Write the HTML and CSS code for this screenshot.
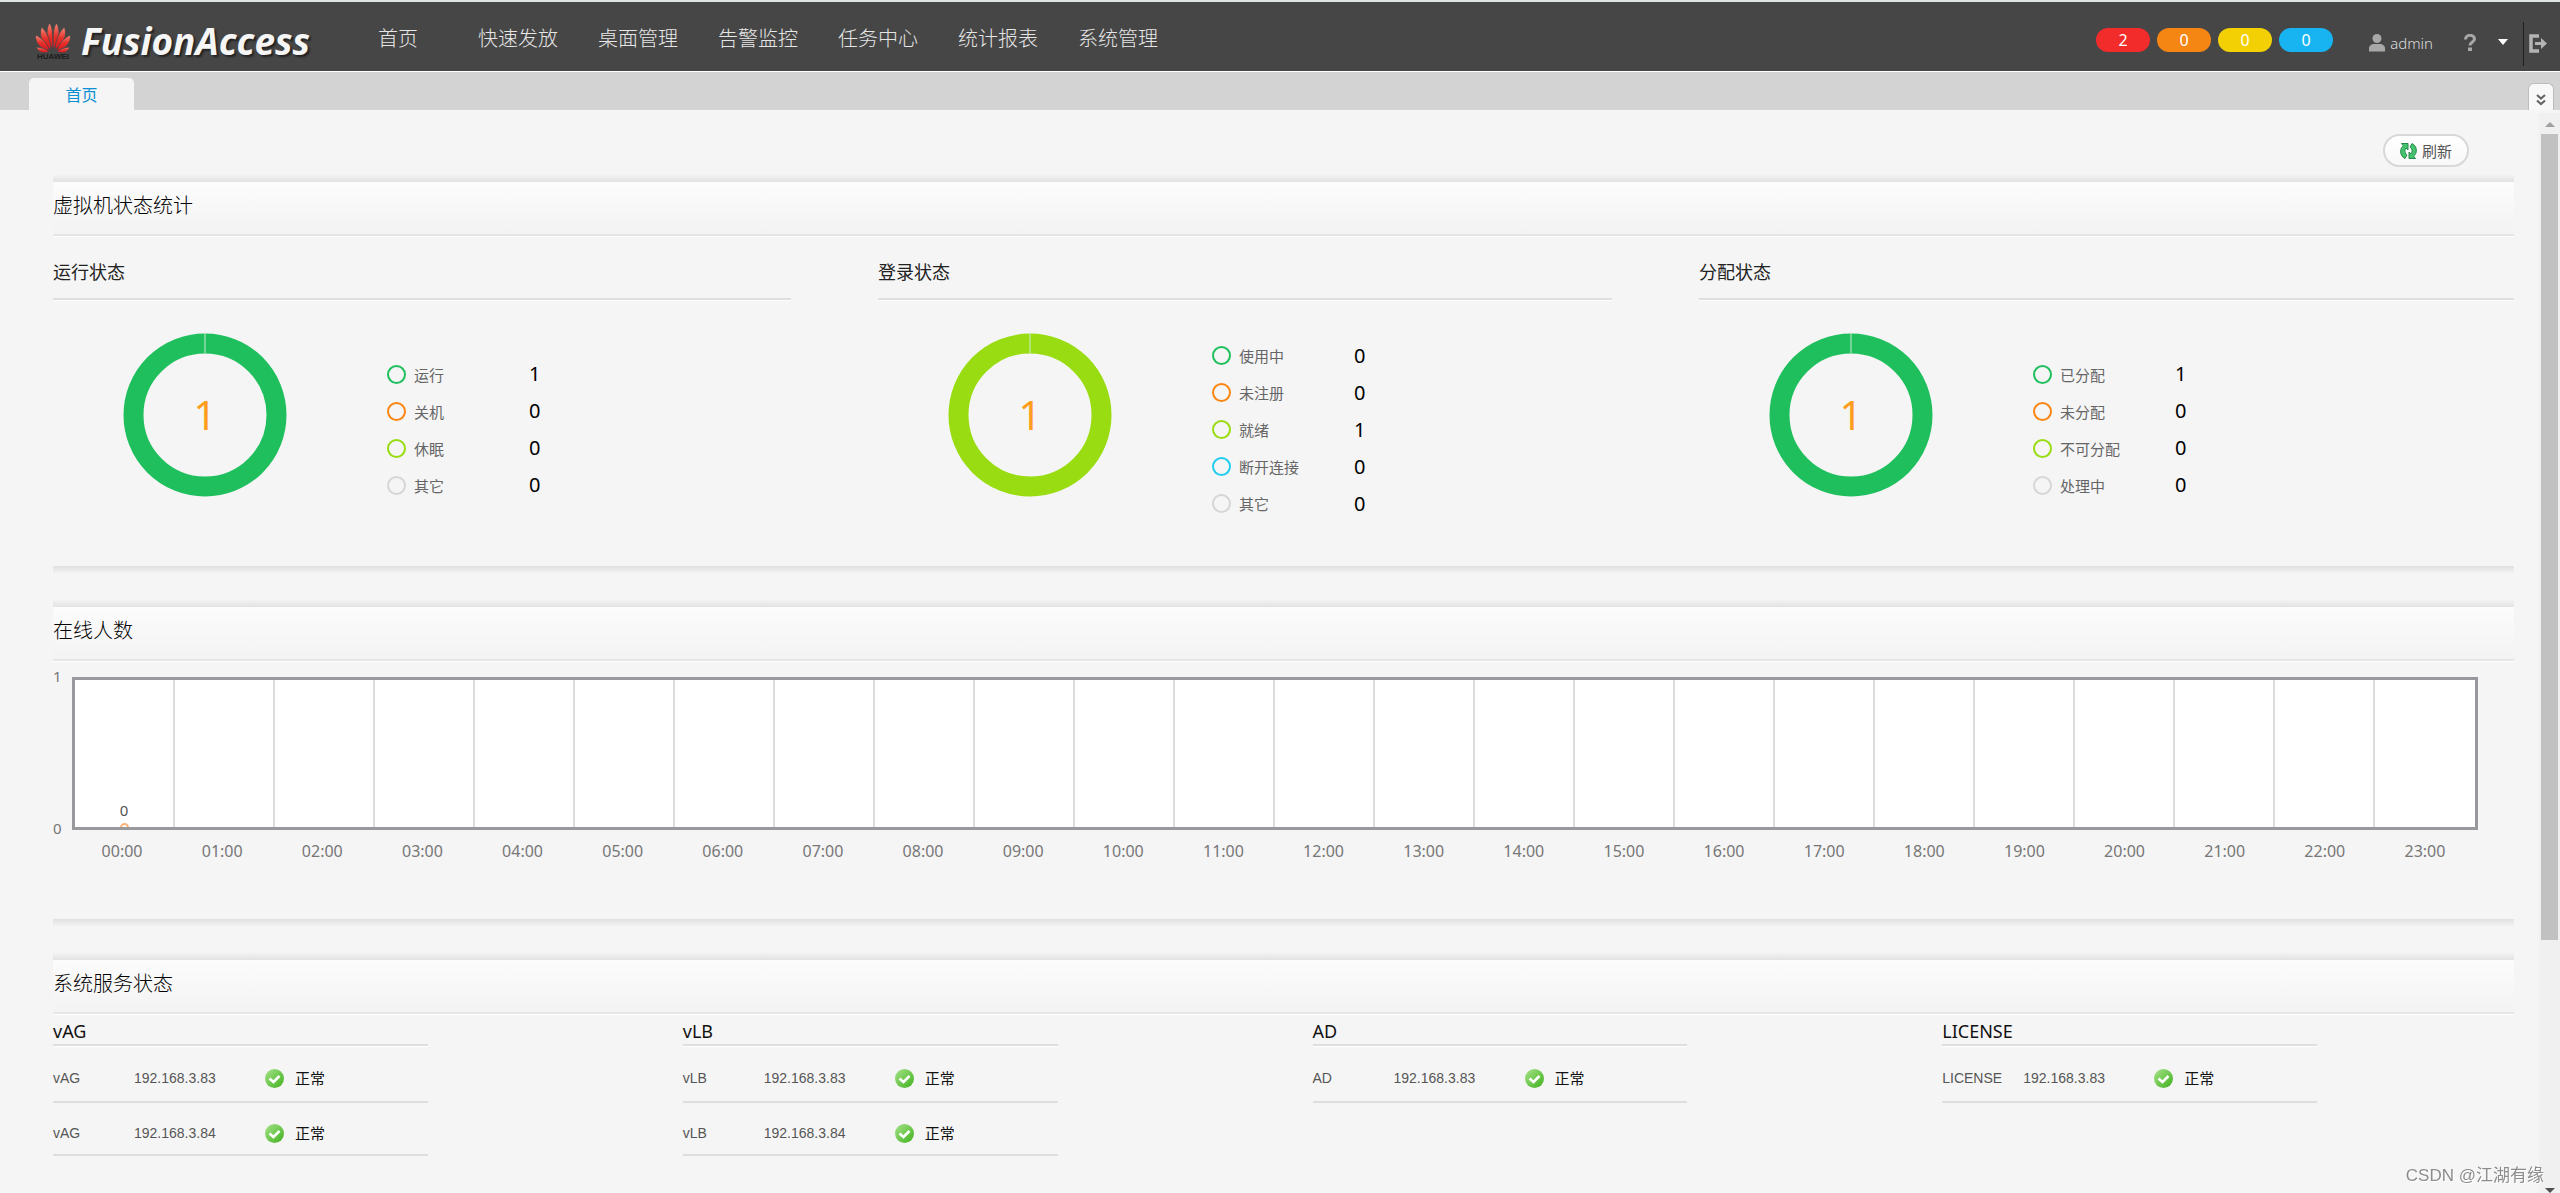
FILE: index.html
```html
<!DOCTYPE html>
<html lang="zh-CN">
<head>
<meta charset="utf-8">
<title>FusionAccess</title>
<meta name="viewport" content="width=device-width, initial-scale=1">
<link rel="stylesheet" href="styles.css">
</head>
<body>
<svg class="defs" width="0" height="0" aria-hidden="true">
  <defs>
    <linearGradient id="ok-fill" x1="0" y1="0" x2="1" y2="1">
      <stop offset="0" stop-color="#a6e38a"/><stop offset="1" stop-color="#3fb01c"/>
    </linearGradient>
    <linearGradient id="petal-fill" x1="0" y1="0" x2="0" y2="1">
      <stop offset="0" stop-color="#f58a78"/><stop offset="0.5" stop-color="#e5322c"/><stop offset="1" stop-color="#d8161c"/>
    </linearGradient>
    <symbol id="ok" viewBox="0 0 19 19">
      <circle cx="9.500" cy="9.500" r="9.500" fill="url(#ok-fill)"/>
      <path d="M4.500 9.500l4 3.500L14.500 7" fill="none" stroke="#fff" stroke-width="2.600"/>
    </symbol>
  </defs>
</svg>
<div class="app">
  <header class="topbar">
    <a class="brand" href="#">
      <svg class="brand-mark" viewBox="0 0 38 38" aria-hidden="true">
        <g fill="url(#petal-fill)" stroke="#464646" stroke-width="0.800">
          <path d="M18.500 27C13 20 11 8 15.500 1c3.500 4 4 16 3 26z"/>
          <path d="M19.500 27C25 20 27 8 22.500 1c-3.500 4-4 16-3 26z"/>
          <path d="M17 27.500C8 22 4.500 13 7.500 5c5 4 9 13 9.500 22.500z"/>
          <path d="M21 27.500C30 22 33.500 13 30.500 5c-5 4-9 13-9.500 22.500z"/>
          <path d="M15.500 28.500C6 27 1 21 1.500 13c6 2.500 12 8.500 14 15.500z"/>
          <path d="M22.500 28.500C32 27 37 21 36.500 13c-6 2.500-12 8.500-14 15.500z"/>
          <path d="M15 29.500c-5 2.500-10 1.500-13-4.500 5 .5 10 1.500 13 4.500z"/>
          <path d="M23 29.500c5 2.500 10 1.500 13-4.500-5 .5-10 1.500-13 4.500z"/>
        </g>
        <text x="19" y="37" text-anchor="middle" class="brand-sub">HUAWEI</text>
      </svg>
      <span class="brand-name">FusionAccess</span>
    </a>
    <nav class="menu">
      <a class="menu-home" href="#">首页</a>
      <a href="#">快速发放</a>
      <a href="#">桌面管理</a>
      <a href="#">告警监控</a>
      <a href="#">任务中心</a>
      <a href="#">统计报表</a>
      <a href="#">系统管理</a>
    </nav>
    <div class="alarms">
      <a class="alarm critical" href="#">2</a>
      <a class="alarm major" href="#">0</a>
      <a class="alarm minor" href="#">0</a>
      <a class="alarm info" href="#">0</a>
    </div>
    <a class="user" href="#">
      <svg width="16" height="18" viewBox="0 0 16 18" aria-hidden="true"><circle cx="8" cy="4.500" r="4.500" fill="#a8a8a8"/><path d="M0 17.500v-3C0 11.500 2.500 10 5 10h6c2.500 0 5 1.500 5 4.500v3z" fill="#a8a8a8"/></svg>
      <span>admin</span>
    </a>
    <button class="icon-btn help" type="button" aria-label="帮助">
      <svg width="12" height="17" viewBox="0 0 12 17" aria-hidden="true"><path d="M1.500 5.500C1.500 0 10.500 0 10.500 5c0 3-4.500 3-4.500 6.500" fill="none" stroke="#a8a8a8" stroke-width="3"/><rect x="4" y="13.500" width="4" height="3.500" fill="#a8a8a8"/></svg>
    </button>
    <button class="icon-btn more" type="button" aria-label="更多">
      <svg width="12" height="7" viewBox="0 0 12 7" aria-hidden="true"><path d="M1 0h10L6 6z" fill="#fff"/></svg>
    </button>
    <button class="icon-btn logout" type="button" aria-label="退出">
      <svg width="18" height="19" viewBox="0 0 18 19" aria-hidden="true"><path d="M10 2H2v15h8" fill="none" stroke="#b4b4b4" stroke-width="3.500"/><path d="M6 8h6V4l6 5.500-6 5.500v-4H6z" fill="#b4b4b4"/></svg>
    </button>
  </header>

  <div class="tabs">
    <a class="tab" href="#">首页</a>
    <button class="tab-menu" type="button" aria-label="标签列表">
      <svg width="10" height="12" viewBox="0 0 10 12" aria-hidden="true"><path d="M1 1l4 3.500L9 1M1 6.500L5 10l4-3.500" fill="none" stroke="#666" stroke-width="2.200"/></svg>
    </button>
  </div>

  <div class="viewport">
    <main class="content">
      <div class="toolbar">
        <button class="refresh" type="button">
          <svg width="17" height="18" viewBox="0 0 17 18" aria-hidden="true"><g fill="#45c46e" stroke="#24894a" stroke-width="1"><path d="M5 16.500C-.5 14 -.5 6 3.500 4L1.500 1.500H8v6.500L6 6C4.500 8 4.500 11 7 13z"/><path d="M12 1.500C17.500 4 17.500 12 13.500 14l2 2.500H9V10l2 2C12.500 10 12.500 7 10 5z"/></g></svg>
          刷新
        </button>
      </div>

      <section class="panel">
        <h2 class="panel-title">虚拟机状态统计</h2>
        <div class="stats">
          <article class="stat">
            <h3>运行状态</h3>
            <div class="stat-body">
              <svg class="donut green" viewBox="0 0 164 164" role="img" aria-label="运行状态"><circle cx="82" cy="82" r="71.500"/><path d="M82 0v20"/><text x="82" y="97">1</text></svg>
              <table class="legend">
                <tr><th><i class="ring green"></i>运行</th><td>1</td></tr>
                <tr><th><i class="ring orange"></i>关机</th><td>0</td></tr>
                <tr><th><i class="ring lime"></i>休眠</th><td>0</td></tr>
                <tr><th><i class="ring grey"></i>其它</th><td>0</td></tr>
              </table>
            </div>
          </article>
          <article class="stat">
            <h3>登录状态</h3>
            <div class="stat-body">
              <svg class="donut lime" viewBox="0 0 164 164" role="img" aria-label="登录状态"><circle cx="82" cy="82" r="71.500"/><path d="M82 0v20"/><text x="82" y="97">1</text></svg>
              <table class="legend">
                <tr><th><i class="ring green"></i>使用中</th><td>0</td></tr>
                <tr><th><i class="ring orange"></i>未注册</th><td>0</td></tr>
                <tr><th><i class="ring lime"></i>就绪</th><td>1</td></tr>
                <tr><th><i class="ring cyan"></i>断开连接</th><td>0</td></tr>
                <tr><th><i class="ring grey"></i>其它</th><td>0</td></tr>
              </table>
            </div>
          </article>
          <article class="stat">
            <h3>分配状态</h3>
            <div class="stat-body">
              <svg class="donut green" viewBox="0 0 164 164" role="img" aria-label="分配状态"><circle cx="82" cy="82" r="71.500"/><path d="M82 0v20"/><text x="82" y="97">1</text></svg>
              <table class="legend">
                <tr><th><i class="ring green"></i>已分配</th><td>1</td></tr>
                <tr><th><i class="ring orange"></i>未分配</th><td>0</td></tr>
                <tr><th><i class="ring lime"></i>不可分配</th><td>0</td></tr>
                <tr><th><i class="ring grey"></i>处理中</th><td>0</td></tr>
              </table>
            </div>
          </article>
        </div>
      </section>

      <section class="panel">
        <h2 class="panel-title">在线人数</h2>
        <div class="chart">
          <div class="axis-y"><span>1</span><span>0</span></div>
          <div class="plot">
            <div class="cell first"><span>0</span><i class="point"></i></div>
            <div class="cell"></div><div class="cell"></div><div class="cell"></div><div class="cell"></div><div class="cell"></div>
            <div class="cell"></div><div class="cell"></div><div class="cell"></div><div class="cell"></div><div class="cell"></div><div class="cell"></div>
            <div class="cell"></div><div class="cell"></div><div class="cell"></div><div class="cell"></div><div class="cell"></div><div class="cell"></div>
            <div class="cell"></div><div class="cell"></div><div class="cell"></div><div class="cell"></div><div class="cell"></div><div class="cell"></div>
          </div>
          <div class="axis-x">
            <span>00:00</span><span>01:00</span><span>02:00</span><span>03:00</span><span>04:00</span><span>05:00</span><span>06:00</span><span>07:00</span><span>08:00</span><span>09:00</span><span>10:00</span><span>11:00</span><span>12:00</span><span>13:00</span><span>14:00</span><span>15:00</span><span>16:00</span><span>17:00</span><span>18:00</span><span>19:00</span><span>20:00</span><span>21:00</span><span>22:00</span><span>23:00</span>
          </div>
        </div>
      </section>

      <section class="panel last">
        <h2 class="panel-title">系统服务状态</h2>
        <div class="services">
          <article class="service">
            <h3>vAG</h3>
            <table>
              <tr><th>vAG</th><td class="ip">192.168.3.83</td><td class="state"><svg width="19" height="19" aria-hidden="true"><use href="#ok"/></svg>正常</td></tr>
              <tr><th>vAG</th><td class="ip">192.168.3.84</td><td class="state"><svg width="19" height="19" aria-hidden="true"><use href="#ok"/></svg>正常</td></tr>
            </table>
          </article>
          <article class="service">
            <h3>vLB</h3>
            <table>
              <tr><th>vLB</th><td class="ip">192.168.3.83</td><td class="state"><svg width="19" height="19" aria-hidden="true"><use href="#ok"/></svg>正常</td></tr>
              <tr><th>vLB</th><td class="ip">192.168.3.84</td><td class="state"><svg width="19" height="19" aria-hidden="true"><use href="#ok"/></svg>正常</td></tr>
            </table>
          </article>
          <article class="service">
            <h3>AD</h3>
            <table>
              <tr><th>AD</th><td class="ip">192.168.3.83</td><td class="state"><svg width="19" height="19" aria-hidden="true"><use href="#ok"/></svg>正常</td></tr>
            </table>
          </article>
          <article class="service">
            <h3>LICENSE</h3>
            <table>
              <tr><th>LICENSE</th><td class="ip">192.168.3.83</td><td class="state"><svg width="19" height="19" aria-hidden="true"><use href="#ok"/></svg>正常</td></tr>
            </table>
          </article>
        </div>
      </section>
    </main>
    <div class="scrollbar" aria-hidden="true">
      <i class="arrow up"></i>
      <div class="track"><div class="thumb"></div></div>
      <i class="arrow down"></i>
    </div>
  </div>
</div>
<div class="watermark">CSDN @江湖有缘</div>
</body>
</html>
```
FILE: styles.css
```css
* { box-sizing: border-box; }

body {
  margin: 0;
  background: #f5f5f5;
  color: #222;
  font-family: "Noto Sans", "Noto Sans CJK SC", sans-serif;
  font-size: 15px;
  font-weight: 400;
}

a { color: inherit; text-decoration: none; }
button { font: inherit; border: 0; padding: 0; background: none; cursor: pointer; }
h2, h3 { margin: 0; font-weight: 400; }
svg { display: block; flex: none; }
.defs { position: absolute; }

.app {
  display: flex;
  flex-direction: column;
  height: 100vh;
  overflow: hidden;
}

/* Top bar */
.topbar {
  display: flex;
  align-items: center;
  flex: none;
  height: 72px;
  padding: 0 13px 0 34px;
  background: #464646;
  border-top: 2px solid #dfe3e4;
  border-bottom: 1px solid #fff;
  color: #e6e6e6;
}
.brand { display: flex; align-items: center; gap: 9px; width: 344px; padding-top: 8px; }
.brand-mark { width: 38px; height: 38px; }
.brand-sub { font: bold 8px "Liberation Sans", sans-serif; fill: #1c1c1c; }
.brand-name {
  font: italic bold 37px/38px "Open Sans", "Noto Sans", sans-serif;
  color: #f6f6f6;
  text-shadow: 2px 2px 2px #222;
}
.menu { display: flex; gap: 40px; font-size: 20px; font-weight: 300; line-height: 30px; padding-top: 5px; }
.menu-home { margin-right: 20px; }
.alarms { display: flex; gap: 7px; margin-left: auto; padding-top: 6px; }
.alarm {
  width: 54px;
  height: 24px;
  border-radius: 12px;
  font-size: 16px;
  line-height: 24px;
  text-align: center;
  color: #fff;
}
.critical { background: #f22b2b; }
.major { background: #f68614; }
.minor { background: #f3d003; }
.info { background: #18b4f2; }
.user { display: flex; align-items: center; gap: 5px; margin-left: 36px; padding-top: 12px; font-weight: 300; line-height: 20px; color: #dcdcdc; }
.icon-btn { display: flex; align-items: center; justify-content: center; padding-top: 12px; }
.help { margin-left: 31px; }
.more { margin-left: 21px; }
.logout {
  height: 44px;
  margin: 14px 0 0 14px;
  padding: 0 0 0 5px;
  border-left: 1px solid #1e1e1e;
}

/* Tabs */
.tabs {
  display: flex;
  align-items: flex-end;
  justify-content: space-between;
  flex: none;
  height: 38px;
  padding: 0 6px 0 29px;
  background: #d3d3d3;
}
.tab {
  width: 105px;
  height: 32px;
  border-radius: 5px 5px 0 0;
  background: #f5f5f5;
  font-size: 16px;
  line-height: 35px;
  text-align: center;
  color: #0a8fd2;
}
.tab-menu {
  display: flex;
  align-items: center;
  justify-content: center;
  width: 26px;
  height: 27px;
  padding-top: 6px;
  border: 1px solid #bdbdbd;
  border-bottom: 0;
  border-radius: 6px 6px 0 0;
  background: #f8f8f8;
}

/* Page body */
.viewport { display: flex; flex: 1; min-height: 0; }
.content { flex: 1; min-width: 0; overflow: hidden; padding: 24px 25px 0 53px; }
.toolbar { display: flex; justify-content: flex-end; height: 40px; padding-right: 45px; }
.refresh {
  display: flex;
  align-items: center;
  gap: 5px;
  height: 33px;
  padding: 0 15px;
  border: 2px solid #d8d8d8;
  border-radius: 17px;
  background: linear-gradient(#fff, #f8f8f8);
  color: #555;
}

.panel { margin-bottom: 25px; }
.panel::before {
  content: "";
  display: block;
  height: 8px;
  background: linear-gradient(#f5f5f5, #e2e2e2);
}
.panel::after {
  content: "";
  display: block;
  height: 8px;
  background: linear-gradient(#e0e0e0, #f5f5f5);
}
.panel.last::after { content: none; }
.panel-title {
  height: 54px;
  font-size: 20px;
  font-weight: 300;
  line-height: 47px;
  color: #000;
  background: linear-gradient(#fcfcfc, #f3f3f3);
  border-bottom: 2px solid #e6e6e6;
  box-shadow: 0 1px #fff;
}

/* VM status */
.stats { display: grid; grid-template-columns: 738fr 734fr 815fr; column-gap: 87px; height: 330px; }
.stat h3 {
  height: 64px;
  padding-top: 23px;
  font-size: 18px;
  line-height: 26px;
  border-bottom: 2px solid #dedede;
  box-shadow: 0 1px #fff;
}
.stat-body { display: flex; align-items: center; gap: 100px; height: 262px; padding-left: 70px; }
.donut { width: 164px; height: 164px; margin-bottom: 32px; }
.donut circle { fill: none; stroke: currentColor; stroke-width: 20; }
.donut path { stroke: #c4ecd0; stroke-width: 1; }
.donut text { font-size: 40px; fill: #ff9d1e; text-anchor: middle; }
.green { color: #20bf5d; }
.orange { color: #fb8612; }
.lime { color: #98dc11; }
.cyan { color: #20cdee; }
.grey { color: #d6d6d6; }
.legend { border-collapse: collapse; margin-bottom: 3px; }
.legend th {
  display: flex;
  align-items: center;
  gap: 8px;
  width: 142px;
  height: 37px;
  padding: 0;
  font-weight: 400;
  color: #666;
}
.legend td { padding: 0; font-size: 20px; line-height: 36px; color: #000; }
.ring { flex: none; width: 19px; height: 19px; border: 2px solid; border-radius: 50%; }

/* Online users */
.chart {
  display: grid;
  grid-template-columns: 19px 1fr;
  grid-template-rows: 153px 40px;
  height: 258px;
  padding: 16px 36px 0 0;
  font-size: 15px;
  color: #777;
}
.axis-y { display: flex; flex-direction: column; justify-content: space-between; line-height: 20px; margin: -11px 0 -8px; }
.plot { display: grid; grid-template-columns: repeat(24, 1fr); border: 3px solid #98989d; background: #fff; }
.cell { border-right: 2px solid #dcdcdc; }
.cell:last-child { border-right: 0; }
.first {
  display: flex;
  flex-direction: column;
  align-items: center;
  justify-content: flex-end;
  overflow: hidden;
  color: #555;
}
.point { width: 9px; height: 9px; margin: 4px 0 -5px; border: 2px solid #fbb47c; border-radius: 50%; }
.first span { line-height: 18px; }
.axis-x {
  display: grid;
  grid-column: 2;
  grid-template-columns: repeat(24, 1fr);
  padding-right: 3px;
  font-size: 16px;
  line-height: 42px;
  text-align: center;
}

/* Services */
.services { display: grid; grid-template-columns: repeat(4, 1fr); column-gap: 255px; padding-right: 197px; }
.service h3 {
  height: 32px;
  font-size: 18px;
  line-height: 34px;
  color: #111;
  border-bottom: 2px solid #dedede;
  box-shadow: 0 1px #fff;
}
.service table { width: 100%; border-collapse: collapse; font-size: 14px; table-layout: fixed; }
.service tr { height: 53px; border-bottom: 2px solid #dedede; box-shadow: 0 1px #fff; }
.service tr:first-child { height: 56px; }
.service th, .service td { padding: 8px 0 0; text-align: left; font-family: "Liberation Sans", "Noto Sans CJK SC", sans-serif; font-weight: 400; color: #555; }
.service th { width: 81px; }
.service .ip { width: 131px; }
.service .state { color: #111; font-size: 15px; }
.state svg { display: inline-block; vertical-align: -4px; margin-right: 11px; }

/* Scrollbar */
.scrollbar {
  display: flex;
  flex-direction: column;
  align-items: center;
  flex: none;
  width: 21px;
  margin-top: 3px;
  padding-top: 9px;
  background: #f0f0f0;
}
.arrow { width: 0; height: 0; border: 5px solid transparent; }
.up { border-top: 0; border-bottom-color: #a0a0a0; }
.down { border-bottom: 0; border-top-color: #505050; }
.track { flex: 1; width: 17px; margin-top: 7px; }
.thumb { height: calc(76% + 5px); background: #c1c1c1; }

.watermark {
  position: fixed;
  right: 16px;
  bottom: 4px;
  font: 17px/26px "Liberation Sans", "Noto Sans CJK SC", sans-serif;
  color: #8c8c8c;
  text-shadow: 1px 1px #fff;
}
```
